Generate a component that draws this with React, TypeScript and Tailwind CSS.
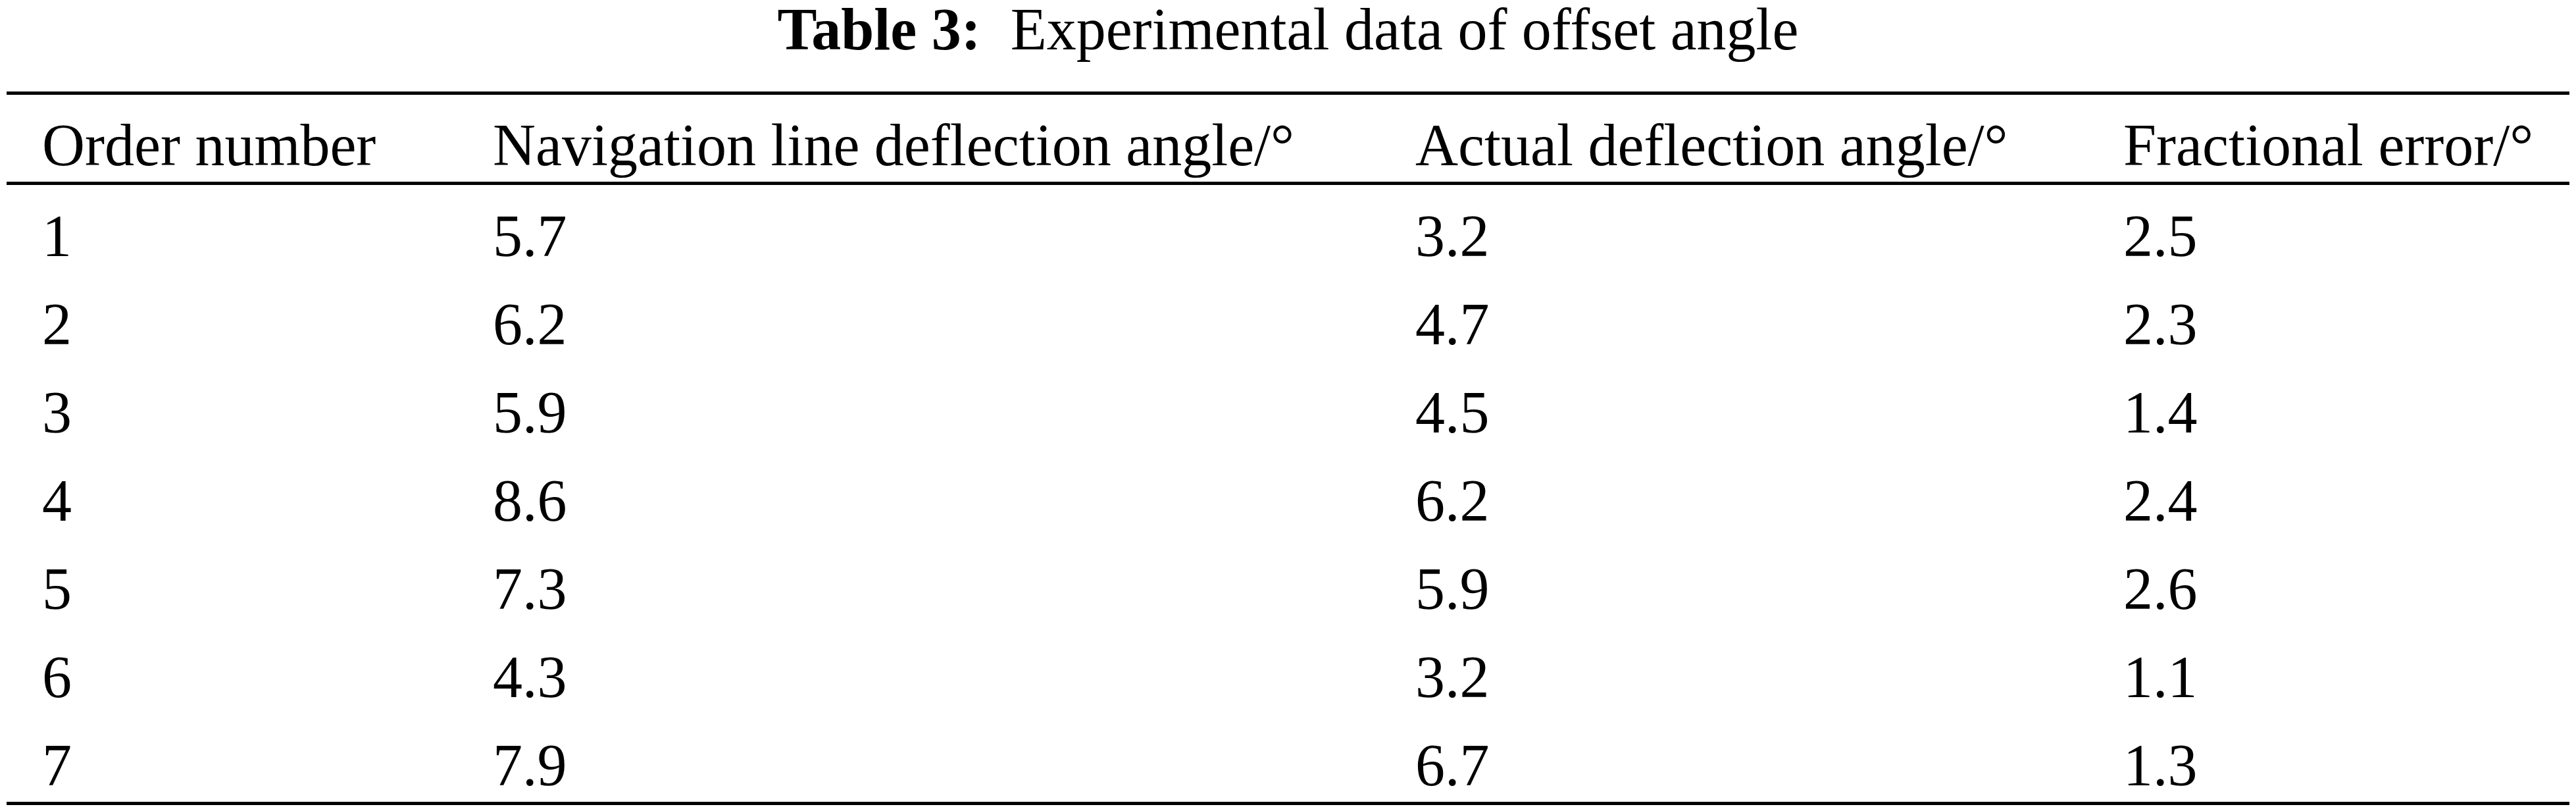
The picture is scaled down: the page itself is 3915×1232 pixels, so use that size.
import React from "react";

const rows: [string, string, string, string][] = [
  ["1", "5.7", "3.2", "2.5"],
  ["2", "6.2", "4.7", "2.3"],
  ["3", "5.9", "4.5", "1.4"],
  ["4", "8.6", "6.2", "2.4"],
  ["5", "7.3", "5.9", "2.6"],
  ["6", "4.3", "3.2", "1.1"],
  ["7", "7.9", "6.7", "1.3"],
];

function Row({ cells }: { cells: string[] }) {
  return (
    <div className="grid grid-cols-[739px_1402px_1076px_1fr] leading-[110px] whitespace-nowrap">
      <div className="pl-[54px]">{cells[0]}</div>
      <div>{cells[1]}</div>
      <div>{cells[2]}</div>
      <div>{cells[3]}</div>
    </div>
  );
}

export default function App() {
  return (
    <div className="w-[3915px] h-[1232px] bg-white text-black font-['Liberation_Serif',serif] text-[90px] overflow-hidden">
      <div className="flex justify-center leading-[90px] whitespace-nowrap">
        <span className="font-bold">Table 3:</span>
        <span className="ml-[45px]">Experimental data of offset angle</span>
      </div>
      <div className="mx-[10px] mt-[49px]">
        <div className="h-[5px] bg-black" />
        <div className="pt-[22px]">
          <Row
            cells={[
              "Order number",
              "Navigation line deflection angle/°",
              "Actual deflection angle/°",
              "Fractional error/°",
            ]}
          />
        </div>
        <div className="h-[5px] bg-black" />
        <div className="pt-[23px] flex flex-col gap-[24px]">
          {rows.map((r) => (
            <Row key={r[0]} cells={r} />
          ))}
        </div>
        <div className="h-[5px] bg-black" />
      </div>
    </div>
  );
}
